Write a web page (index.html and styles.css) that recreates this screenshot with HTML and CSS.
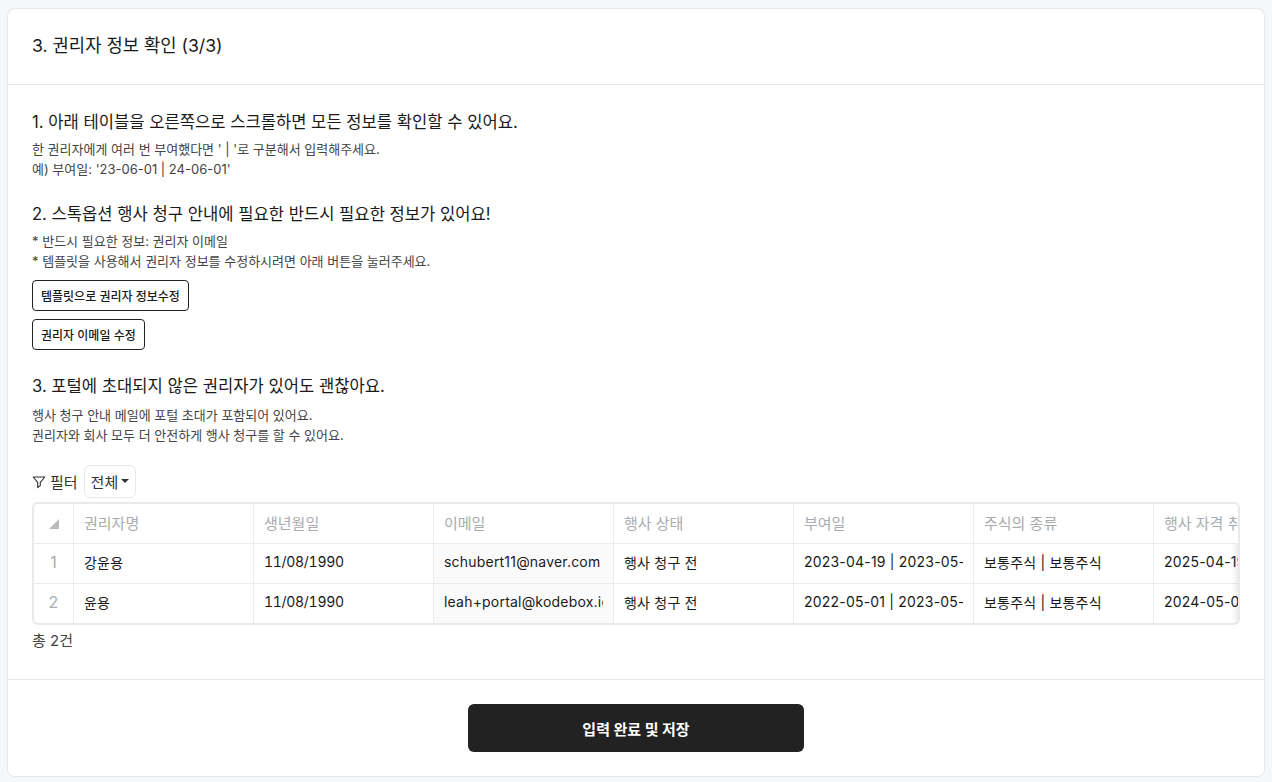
FILE: index.html
```html
<!DOCTYPE html>
<html lang="ko">
<head>
<meta charset="utf-8">
<title>권리자 정보 확인</title>
<link rel="stylesheet" href="styles.css">
</head>
<body>
<main class="card">
  <header class="card-head"><h1>3. 권리자 정보 확인 (3/3)</h1></header>
  <div class="card-body">
    <section class="block b1">
      <h2>1. 아래 테이블을 오른쪽으로 스크롤하면 모든 정보를 확인할 수 있어요.</h2>
      <p>한 권리자에게 여러 번 부여했다면 ' | '로 구분해서 입력해주세요.</p>
      <p>예) 부여일: '23-06-01 | 24-06-01'</p>
    </section>
    <section class="block b2">
      <h2>2. 스톡옵션 행사 청구 안내에 필요한 반드시 필요한 정보가 있어요!</h2>
      <p>* 반드시 필요한 정보: 권리자 이메일</p>
      <p>* 템플릿을 사용해서 권리자 정보를 수정하시려면 아래 버튼을 눌러주세요.</p>
      <div class="actions">
        <button class="outline" type="button">템플릿으로 권리자 정보수정</button>
        <button class="outline" type="button">권리자 이메일 수정</button>
      </div>
    </section>
    <section class="block b3">
      <h2>3. 포털에 초대되지 않은 권리자가 있어도 괜찮아요.</h2>
      <p>행사 청구 안내 메일에 포털 초대가 포함되어 있어요.</p>
      <p>권리자와 회사 모두 더 안전하게 행사 청구를 할 수 있어요.</p>
    </section>
    <div class="filter">
      <svg class="funnel" width="14" height="14" viewBox="0 0 14 14" fill="none" stroke="#333" stroke-width="1.1" stroke-linejoin="round"><path d="M1.2 2h11.6L8.3 7.4v3.2L5.7 12.6V7.4z"/></svg>
      <span class="filter-label">필터</span>
      <button class="select" type="button">전체<i class="caret"></i></button>
    </div>
    <div class="sheet">
      <table>
        <colgroup>
          <col class="c-idx"><col class="c"><col class="c"><col class="c"><col class="c"><col class="c"><col class="c"><col class="c">
        </colgroup>
        <thead>
          <tr>
            <th class="idx"><i class="corner"></i></th>
            <th><div>권리자명</div></th><th><div>생년월일</div></th><th><div>이메일</div></th><th><div>행사 상태</div></th><th><div>부여일</div></th><th><div>주식의 종류</div></th><th><div>행사 자격 취득일</div></th>
          </tr>
        </thead>
        <tbody>
          <tr>
            <td class="idx">1</td>
            <td><div>강윤용</div></td><td class="birth"><div>11/08/1990</div></td><td class="tint"><div>schubert11@naver.com</div></td><td><div>행사 청구 전</div></td><td><div>2023-04-19 | 2023-05-01</div></td><td><div>보통주식 | 보통주식</div></td><td><div>2025-04-19 | 2025-05-01</div></td>
          </tr>
          <tr>
            <td class="idx">2</td>
            <td><div>윤용</div></td><td class="birth"><div>11/08/1990</div></td><td class="tint"><div>leah+portal@kodebox.io</div></td><td><div>행사 청구 전</div></td><td><div>2022-05-01 | 2023-05-01</div></td><td><div>보통주식 | 보통주식</div></td><td><div>2024-05-01 | 2025-05-01</div></td>
          </tr>
        </tbody>
      </table>
      <i class="fade"></i>
    </div>
    <p class="total">총 2건</p>
  </div>
  <footer class="card-foot"><button class="primary" type="button">입력 완료 및 저장</button></footer>
</main>
</body>
</html>
```

FILE: styles.css
```css
* { box-sizing: border-box; }
html, body { margin: 0; height: 100%; }
body {
  background: #f6f7f9;
  padding: 8px 7px 5px;
  color: #1f1f1f;
  font-family: Inter, "Noto Sans CJK KR", sans-serif;
}
h1, h2, p { margin: 0; font-weight: 400; }
button { font-family: inherit; cursor: pointer; }

.card {
  background: #fff;
  border: 1px solid #e6e8eb;
  border-radius: 8px;
  height: 769px;
  display: flex;
  flex-direction: column;
}
.card-head {
  height: 76px;
  padding: 0 24px 2px;
  display: flex;
  align-items: center;
  border-bottom: 1px solid #e6e8eb;
}
h1 { font-size: 17.7px; line-height: 26px; color: #1a1a1a; }
.card-body { flex: 1; padding: 24px 24px 0; }

h2 { font-size: 16.6px; line-height: 26px; color: #1a1a1a; }
.block p { font-size: 13px; line-height: 20px; color: #444; }
.b1 h2 { margin-bottom: 4px; }
.b2 { margin-top: 22px; }
.b2 h2 { margin-bottom: 4px; }
.b3 { margin-top: 23px; }
.b3 h2 { margin-bottom: 6px; }

.actions { display: flex; flex-direction: column; align-items: flex-start; gap: 8px; margin-top: 9px; }
.outline {
  height: 31px;
  padding: 0 8px;
  font-size: 12px;
  font-weight: 500;
  color: #1a1a1a;
  background: #fff;
  border: 1px solid #222;
  border-radius: 4px;
}

.filter { display: flex; align-items: center; margin-top: 20px; height: 33px; font-size: 15px; color: #333; }
.funnel { margin-right: 4px; }
.filter-label { padding-bottom: 1px; }
.select {
  height: 33px;
  margin-left: 6px;
  padding: 0 6px 1px;
  font-size: 15px;
  color: #333;
  background: #fff;
  border: 1px solid #e6e8eb;
  border-radius: 6px;
  display: flex;
  align-items: center;
}
.caret {
  width: 0; height: 0;
  margin-left: 3px;
  border: 4px solid transparent;
  border-top-color: #333;
  border-bottom-width: 0;
}

.sheet {
  position: relative;
  margin-top: 4px;
  width: 1208px;
  height: 123px;
  overflow: hidden;
  border: 2px solid #e8e9eb;
  border-radius: 6px;
}
table { border-collapse: separate; border-spacing: 0; table-layout: fixed; width: 1300px; font-size: 14px; letter-spacing: .2px; }
.c-idx { width: 40px; }
.c { width: 180px; }
th, td {
  height: 40px;
  padding: 0 10px 2px;
  border-right: 1px solid #ebecee;
  border-bottom: 1px solid #ebecee;
  font-weight: 400;
  text-align: left;
  color: #1a1a1a;
}
td { padding-bottom: 4px; }
th { color: #a9abae; font-size: 15px; letter-spacing: 0; }
th div, td div { overflow: hidden; white-space: nowrap; }
th.idx, td.idx { padding: 0 0 3px; text-align: center; color: #a9abae; font-size: 16px; }
.birth { font-variant-numeric: tabular-nums; letter-spacing: -.3px; }
.tint { background: #fafafa; }
.corner {
  display: inline-block;
  width: 0; height: 0;
  border-style: solid;
  border-width: 0 0 10px 10px;
  border-color: transparent transparent #b9bbbe transparent;
  vertical-align: middle;
}
.fade {
  position: absolute;
  top: 40px; right: 0; bottom: 0;
  width: 6px;
  background: linear-gradient(to right, rgba(0,0,0,0), rgba(0,0,0,.07));
}
.total { margin-top: 6px; font-size: 15px; line-height: 20px; color: #444; }

.card-foot {
  height: 97px;
  border-top: 1px solid #e6e8eb;
  display: flex;
  justify-content: center;
  align-items: flex-start;
  padding-top: 24px;
}
.primary {
  width: 336px;
  height: 48px;
  background: #222;
  color: #fff;
  border: 0;
  border-radius: 6px;
  font-size: 15px;
  font-weight: 700;
}
```
